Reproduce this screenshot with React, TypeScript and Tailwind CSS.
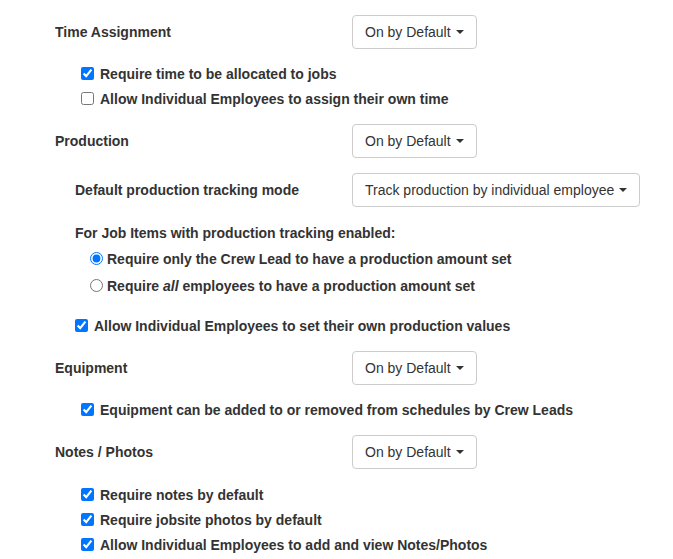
import React from 'react';

const Caret = () => (
  <span className="ml-[5px] inline-block h-0 w-0 border-x-4 border-t-4 border-x-transparent border-t-[#333] align-middle" />
);

const Dropdown = ({ label }: { label: string }) => (
  <button
    type="button"
    className="flex h-[34px] items-center whitespace-nowrap rounded border border-[#ccc] bg-white px-3 text-[14px] font-normal text-[#333]"
  >
    {label}
    <Caret />
  </button>
);

const SectionRow = ({ title, indent = false, value = 'On by Default' }: { title: string; indent?: boolean; value?: string }) => (
  <div className="flex items-center">
    <div className={`w-[297px] font-bold ${indent ? 'pl-5' : ''}`}>{title}</div>
    <Dropdown label={value} />
  </div>
);

const Check = ({ label, checked = true, className = 'pl-[26px]' }: { label: React.ReactNode; checked?: boolean; className?: string }) => (
  <label className={`flex h-[25px] items-center font-bold ${className}`}>
    <input type="checkbox" readOnly checked={checked} className="m-0 h-[13px] w-[13px]" />
    <span className="ml-[6px]">{label}</span>
  </label>
);

const Radio = ({ label, checked = false }: { label: React.ReactNode; checked?: boolean }) => (
  <label className="flex h-[27px] items-center pl-[35px] font-bold">
    <input type="radio" name="prod" readOnly checked={checked} className="m-0 h-[13px] w-[13px]" />
    <span className="ml-[4px]">{label}</span>
  </label>
);

export default function App() {
  return (
    <div
      className="min-h-screen bg-white pl-[55px] pt-[15px] text-[14px] leading-5 text-[#333]"
      style={{ fontFamily: '"Liberation Sans", Arial, sans-serif' }}
    >
      {/* Time Assignment */}
      <SectionRow title="Time Assignment" />
      <div className="mt-[12px]">
        <Check label="Require time to be allocated to jobs" />
        <Check label="Allow Individual Employees to assign their own time" checked={false} />
      </div>

      {/* Production */}
      <div className="mt-[13px]">
        <SectionRow title="Production" />
      </div>
      <div className="mt-[15px]">
        <SectionRow title="Default production tracking mode" indent value="Track production by individual employee" />
      </div>
      <div className="mt-[16px] pl-5 font-bold">For Job Items with production tracking enabled:</div>
      <div className="mt-[2px]">
        <Radio label="Require only the Crew Lead to have a production amount set" checked />
        <Radio
          label={
            <>
              Require <i>all</i> employees to have a production amount set
            </>
          }
        />
      </div>
      <div className="mt-[14px]">
        <Check label="Allow Individual Employees to set their own production values" className="pl-5" />
      </div>

      {/* Equipment */}
      <div className="mt-[13px]">
        <SectionRow title="Equipment" />
      </div>
      <div className="mt-[12px]">
        <Check label="Equipment can be added to or removed from schedules by Crew Leads" />
      </div>

      {/* Notes / Photos */}
      <div className="mt-[13px]">
        <SectionRow title="Notes / Photos" />
      </div>
      <div className="mt-[13px]">
        <Check label="Require notes by default" />
        <Check label="Require jobsite photos by default" />
        <Check label="Allow Individual Employees to add and view Notes/Photos" />
      </div>
    </div>
  );
}
